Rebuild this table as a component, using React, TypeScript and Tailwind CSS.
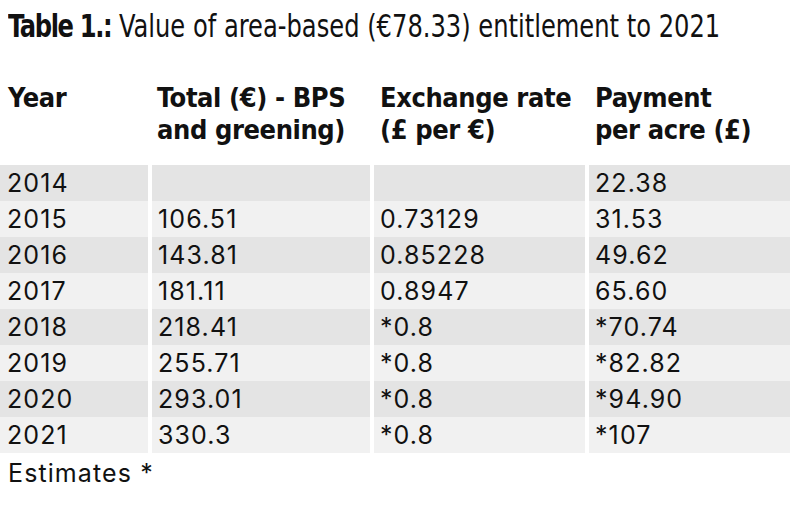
import React from 'react';

const rows = [
  { year: "2014", total: "", rate: "", pay: "22.38" },
  { year: "2015", total: "106.51", rate: "0.73129", pay: "31.53" },
  { year: "2016", total: "143.81", rate: "0.85228", pay: "49.62" },
  { year: "2017", total: "181.11", rate: "0.8947", pay: "65.60" },
  { year: "2018", total: "218.41", rate: "*0.8", pay: "*70.74" },
  { year: "2019", total: "255.71", rate: "*0.8", pay: "*82.82" },
  { year: "2020", total: "293.01", rate: "*0.8", pay: "*94.90" },
  { year: "2021", total: "330.3", rate: "*0.8", pay: "*107" },
];

const narrow = "[font-family:'DejaVu_Sans_Condensed','Liberation_Sans_Narrow',sans-serif]";

const App: React.FC = () => {
  return (
    <div className="w-[790px] h-[522px] bg-white text-[#111] overflow-hidden">
      <div className={`${narrow} pl-[8px] pt-[6px] text-[32px] leading-[40px] whitespace-nowrap`}>
        <div className="inline-block origin-left scale-x-[0.84]">
          <span className="font-bold tracking-[-1.6px]">Table 1.:</span> Value of area-based (€78.33) entitlement to 2021
        </div>
      </div>

      <div className={`${narrow} grid grid-cols-[148px_218px_211px_1fr] gap-x-[4px] mt-[36px] h-[83px] text-[27px] leading-[32px] font-bold tracking-[-0.4px]`}>
        <div className="pl-[8px]">Year</div>
        <div className="pl-[5px]">Total (€) - BPS<br />and greening)</div>
        <div className="pl-[6px]">Exchange rate<br />(£ per €)</div>
        <div className="pl-[6px]">Payment<br />per acre (£)</div>
      </div>

      <div className="[font-family:Inter,sans-serif] text-[25px] leading-[36px] tracking-[1.1px]">
        {rows.map((r, i) => (
          <div key={r.year} className="grid grid-cols-[148px_218px_211px_1fr] gap-x-[4px] h-[36px]">
            {[r.year, r.total, r.rate, r.pay].map((c, j) => (
              <div key={j} className={`${i % 2 === 0 ? 'bg-[#e4e4e4]' : 'bg-[#f1f1f1]'} ${j === 0 ? 'pl-[7px]' : 'pl-[6px]'}`}>{c}</div>
            ))}
          </div>
        ))}
        <div className="pl-[8px] pt-[2px]">Estimates *</div>
      </div>
    </div>
  );
};

export default App;
